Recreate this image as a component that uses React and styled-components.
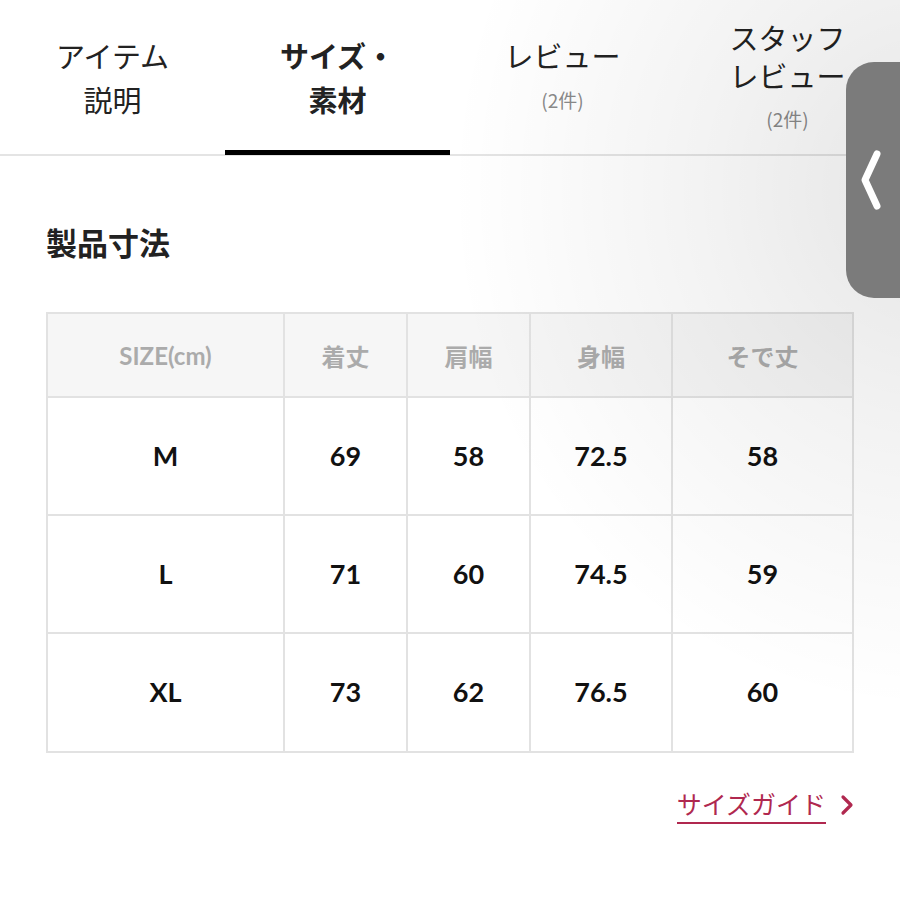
import React from "react";
import styled, { createGlobalStyle } from "styled-components";

const Global = createGlobalStyle`
  html, body { margin: 0; padding: 0; background: #fff; }
  body { font-family: "Noto Sans CJK JP", "Noto Sans", sans-serif; }
`;

const Page = styled.div`
  position: relative;
  width: 900px;
  height: 900px;
  overflow: hidden;
  background: #fff;
`;

const Shade = styled.div`
  position: absolute;
  inset: 0;
  pointer-events: none;
  background: radial-gradient(ellipse 480px 520px at 930px 190px, rgba(0,0,0,0.1) 0%, rgba(0,0,0,0.05) 45%, rgba(0,0,0,0) 100%);
`;

const TabBar = styled.div`
  display: grid;
  grid-template-columns: repeat(4, 225px);
  height: 154px;
  border-bottom: 2px solid #e4e4e4;
`;

const Tab = styled.div`
  position: relative;
  display: flex;
  flex-direction: column;
  align-items: center;
  padding-top: ${(p) => p.$pt}px;
  box-sizing: border-box;
  font-size: 29px;
  line-height: ${(p) => p.$lh}px;
  color: #222;
  font-weight: ${(p) => (p.$active ? 700 : 400)};
  text-align: center;
  &::after {
    content: "";
    display: ${(p) => (p.$active ? "block" : "none")};
    position: absolute;
    left: 0;
    right: 0;
    bottom: -1px;
    height: 5px;
    background: #000;
  }
`;

const Count = styled.span`
  font-size: 19px;
  line-height: 22px;
  color: #8a8a8a;
  font-weight: 400;
  margin-top: ${(p) => p.$mt}px;
`;

const Handle = styled.div`
  position: absolute;
  left: 846px;
  top: 62px;
  width: 100px;
  height: 236px;
  border-radius: 28px;
  background: #7b7b7b;
  display: flex;
  align-items: center;
  padding-left: 14px;
  box-sizing: border-box;
`;

const Content = styled.div`
  padding: 64px 0 0 46px;
`;

const Title = styled.h2`
  margin: 0;
  font-size: 31px;
  line-height: 44px;
  font-weight: 700;
  color: #222;
`;

const Table = styled.div`
  margin-top: 48px;
  display: grid;
  grid-template-columns: 235px 121px 121px 140px 179px;
  grid-template-rows: 82px 116px 116px 117px;
  gap: 2px;
  padding: 2px;
  width: max-content;
  background: #e2e2e2;
`;

const HeadCell = styled.div`
  background: #f6f6f6;
  display: flex;
  align-items: center;
  justify-content: center;
  font-family: Lato, "Noto Sans CJK JP", sans-serif;
  font-weight: 700;
  font-size: 24px;
  color: #ababab;
`;

const Cell = styled.div`
  background: #fff;
  display: flex;
  align-items: center;
  justify-content: center;
  font-family: Lato, "Noto Sans", sans-serif;
  font-weight: 700;
  font-size: 27px;
  color: #111;
  padding-bottom: 2px;
`;

const GuideRow = styled.div`
  display: flex;
  justify-content: flex-end;
  padding: 33px 46px 0 0;
`;

const GuideLink = styled.a`
  display: flex;
  align-items: center;
  gap: 14px;
  color: #b0284f;
  text-decoration: none;
  font-size: 25px;
  line-height: 34px;
`;

const GuideText = styled.span`
  border-bottom: 2px solid #b0284f;
  padding-bottom: 2px;
`;

const heads = ["SIZE(cm)", "着丈", "肩幅", "身幅", "そで丈"];
const rows = [
  ["M", "69", "58", "72.5", "58"],
  ["L", "71", "60", "74.5", "59"],
  ["XL", "73", "62", "76.5", "60"],
];

export default function App() {
  return (
    <Page>
      <Global />
      <TabBar>
        <Tab $pt={33} $lh={44}>
          <span>アイテム</span>
          <span>説明</span>
        </Tab>
        <Tab $pt={33} $lh={44} $active>
          <span>サイズ・</span>
          <span>素材</span>
        </Tab>
        <Tab $pt={33} $lh={44}>
          <span>レビュー</span>
          <Count $mt={12}>(2件)</Count>
        </Tab>
        <Tab $pt={18} $lh={38}>
          <span>スタッフ</span>
          <span>レビュー</span>
          <Count $mt={14}>(2件)</Count>
        </Tab>
      </TabBar>
      <Content>
        <Title>製品寸法</Title>
        <Table>
          {heads.map((h) => (
            <HeadCell key={h}>{h}</HeadCell>
          ))}
          {rows.map((r) =>
            r.map((v, i) => <Cell key={r[0] + i}>{v}</Cell>)
          )}
        </Table>
      </Content>
      <GuideRow>
        <GuideLink href="#">
          <GuideText>サイズガイド</GuideText>
          <svg width="14" height="22" viewBox="0 0 14 22">
            <path d="M3 3 L11 11 L3 19" fill="none" stroke="#b0284f" strokeWidth="3.2" strokeLinecap="round" strokeLinejoin="round" />
          </svg>
        </GuideLink>
      </GuideRow>
      <Shade />
      <Handle>
        <svg width="22" height="64" viewBox="0 0 22 64">
          <path d="M17 6 L5 32 L17 58" fill="none" stroke="#fff" strokeWidth="7" strokeLinecap="round" strokeLinejoin="round" />
        </svg>
      </Handle>
    </Page>
  );
}
